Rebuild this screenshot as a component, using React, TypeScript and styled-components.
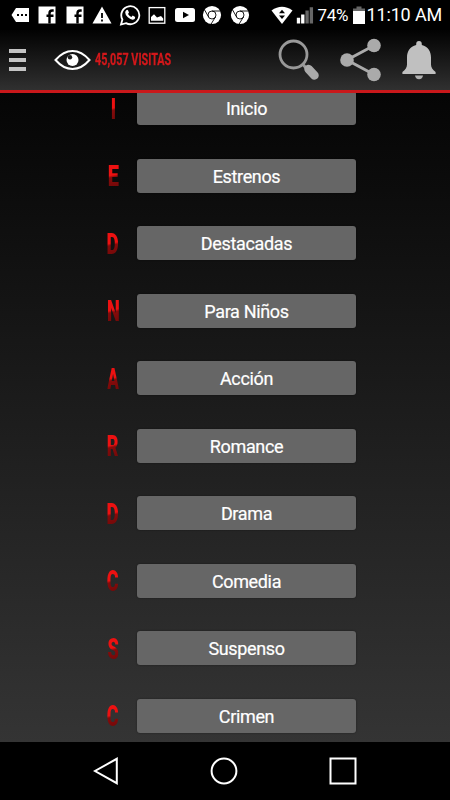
import React from "react";
import styled, { createGlobalStyle } from "styled-components";

const GlobalStyle = createGlobalStyle`
  * { box-sizing: border-box; }
  body { margin: 0; background: #000; overflow: hidden; }
`;

const Screen = styled.div`
  width: 450px;
  height: 800px;
  display: flex;
  flex-direction: column;
  overflow: hidden;
  background: #000;
  color: #fff;
  font-family: Roboto, "Liberation Sans", sans-serif;
`;

const StatusBar = styled.div`
  height: 30px;
  flex: none;
  display: flex;
  align-items: center;
  padding-left: 6px;
  background: #000;
`;

const Notifications = styled.div`
  display: grid;
  grid-template-columns: repeat(9, 27.5px);
  align-items: center;
  justify-items: center;
  margin-right: 17px;
`;

const Glyph = styled.svg<{ $w?: number; $h?: number }>`
  display: block;
  flex: none;
  width: ${(p) => p.$w ?? 20}px;
  height: ${(p) => p.$h ?? 20}px;
`;

const Percent = styled.span`
  width: 39px;
  padding-left: 4px;
  font-size: 17px;
  line-height: 32px;
  letter-spacing: -0.3px;
  white-space: nowrap;
`;

const Clock = styled.span`
  padding-left: 2px;
  font-size: 18px;
  line-height: 32px;
  letter-spacing: -0.15px;
  white-space: nowrap;
`;

const Header = styled.header`
  height: 63px;
  flex: none;
  display: flex;
  align-items: center;
  padding-left: 9px;
  border-bottom: 3px solid #c9181b;
  background: linear-gradient(#020202, #303030);
`;

const MenuButton = styled.div`
  width: 17px;
  height: 22px;
  display: flex;
  flex-direction: column;
  justify-content: space-between;
  margin-right: 28px;

  i {
    height: 4px;
    background: #c4c4c4;
  }
`;

const Visits = styled.div`
  width: 76px;
  margin-left: 4px;
  font-size: 16px;
  font-weight: 700;
  line-height: 20px;
  color: #d3181b;
  -webkit-text-stroke: 0.3px #d3181b;
  white-space: nowrap;

  span {
    display: inline-block;
    transform: scaleX(0.675);
    transform-origin: left center;
  }
`;

const Actions = styled.div`
  margin-left: 107px;
  display: flex;
  align-items: center;
  gap: 20px;
`;

const Content = styled.main`
  height: 649px;
  flex: none;
  overflow: hidden;
  background: linear-gradient(#050505, #343434);
`;

const CategoryList = styled.div`
  display: flex;
  flex-direction: column;
  gap: 33.5px;
  margin-top: -2px;
`;

const Category = styled.div`
  display: flex;
  align-items: center;
  height: 34px;
  padding-left: 103px;
`;

const Initial = styled.div<{ $scale: number }>`
  width: 20px;
  margin-right: 14px;
  padding-top: 1px;
  display: flex;
  justify-content: center;
  font-size: 29.5px;
  font-weight: 900;
  line-height: 26px;

  span {
    transform: scaleX(${(p) => p.$scale});
    color: transparent;
    background: linear-gradient(172deg, #ed1111 46%, #850b0b 54%, #740909 90%);
    background-clip: text;
    -webkit-background-clip: text;
  }
`;

const CategoryButton = styled.button`
  width: 219px;
  height: 34px;
  border: 0;
  border-radius: 3px;
  padding: 1px 0 0;
  background: #666;
  color: #fff;
  box-shadow: 0 0 2px rgba(0, 0, 0, 0.45);
  font: 400 18px Roboto, "Liberation Sans", sans-serif;
  letter-spacing: -0.35px;
  -webkit-text-stroke: 0.2px #fff;
  text-align: center;
`;

const NavBar = styled.nav`
  flex: 1;
  display: flex;
  align-items: center;
  justify-content: space-between;
  padding: 0 93px;
  background: #000;
`;

const categories: { initial: string; label: string; scale: number }[] = [
  { initial: "I", label: "Inicio", scale: 0.6 },
  { initial: "E", label: "Estrenos", scale: 0.68 },
  { initial: "D", label: "Destacadas", scale: 0.64 },
  { initial: "N", label: "Para Niños", scale: 0.62 },
  { initial: "A", label: "Acción", scale: 0.58 },
  { initial: "R", label: "Romance", scale: 0.61 },
  { initial: "D", label: "Drama", scale: 0.64 },
  { initial: "C", label: "Comedia", scale: 0.61 },
  { initial: "S", label: "Suspenso", scale: 0.62 },
  { initial: "C", label: "Crimen", scale: 0.61 },
];

const MessageIcon = () => (
  <Glyph viewBox="0 0 20 20">
    <path d="M6 3h13v14H6l-4.5-7z" fill="#fff" />
    <path d="M7 10h2M11 10h2M15 10h2" stroke="#000" strokeWidth="2" />
  </Glyph>
);

const FacebookIcon = () => (
  <Glyph viewBox="0 0 20 20">
    <path d="M1.5 1.5h17v17h-17z" fill="#fff" />
    <path d="M12.5 18.5V8.3q0-2.8 2.7-2.8h1.5M9.5 10.7h7" fill="none" stroke="#000" strokeWidth="2.4" />
  </Glyph>
);

const WarningIcon = () => (
  <Glyph viewBox="0 0 20 20">
    <path d="M10 1.5l9.5 17H.5z" fill="#fff" />
    <path d="M10 8v5M10 14.5v2" stroke="#000" strokeWidth="1.8" />
  </Glyph>
);

const WhatsAppIcon = () => (
  <Glyph viewBox="0 0 22 22" $w={22} $h={22}>
    <path d="M2 20.5l1.4-5A9 9 0 1 1 7 19.1z" fill="none" stroke="#fff" strokeWidth="1.8" />
    <path
      d="M7.3 6.2q.9-.8 1.7 0l1 2.3-1 1.4q1.2 2.1 3.4 3.1l1.3-1.4 2.5 1.3q.2 2.4-2.3 2.8-2.2.2-5.1-2.4-2.7-2.7-2.6-4.8.1-1.5 1.1-2.3z"
      fill="#fff"
    />
  </Glyph>
);

const ImageIcon = () => (
  <Glyph viewBox="0 0 20 20">
    <rect x="2.2" y="2.6" width="15.6" height="15.6" fill="none" stroke="#fff" strokeWidth="1.3" />
    <path d="M4 15.7V12l3-2.7 3 3.2 4-1.6 2.2 2.5v2.3z" fill="#fff" />
  </Glyph>
);

const VideoIcon = () => (
  <Glyph viewBox="0 0 20 20">
    <rect x="0" y="3" width="20" height="14" rx="2.5" fill="#fff" />
    <path d="M8 6.8l6 3.2-6 3.2z" fill="#000" />
  </Glyph>
);

const ChromeIcon = () => (
  <Glyph viewBox="0 0 20 20">
    <circle cx="10" cy="10" r="9.1" fill="#fff" />
    <circle cx="10" cy="10" r="4" fill="none" stroke="#000" strokeWidth="0.9" />
    <path d="M10 6h8.5M13.4 12L9 19.2M6.6 12L2.4 4.6" fill="none" stroke="#000" strokeWidth="0.9" />
  </Glyph>
);

const WifiIcon = () => (
  <Glyph viewBox="0 0 22 20" $w={22}>
    <path d="M.5 5.5Q11-2 21.5 5.5L11 19z" fill="#fff" />
    <path d="M11 4.7L14 8.3H8zM11 14L8 10.4h6z" fill="#000" />
  </Glyph>
);

const SignalIcon = () => (
  <Glyph viewBox="0 0 22 20" $w={21}>
    <path d="M4 13h3.5v6H4zM8.5 9.5H12V19H8.5z" fill="#fff" />
    <path d="M13 5.3h3.5V19H13zM17.5 2H21v17h-3.5z" fill="#666" />
  </Glyph>
);

const BatteryIcon = () => (
  <Glyph viewBox="0 0 12 20" $w={12}>
    <path d="M3.5 1.5h5v2H12V7H0V3.5h3.5z" fill="#666" />
    <path d="M0 6h12v13H0z" fill="#fff" />
  </Glyph>
);

const EyeIcon = () => (
  <Glyph viewBox="0 0 37 22" $w={37} $h={22}>
    <path
      d="M1.5 11C7 4.7 12.2 2 18.5 2S30 4.7 35.5 11C30 17.3 24.8 20 18.5 20S7 17.3 1.5 11z"
      fill="none"
      stroke="#fff"
      strokeWidth="2"
    />
    <circle cx="18.5" cy="11" r="6" fill="#fff" />
    <circle cx="16" cy="8.2" r="2.2" fill="#1b1b1b" />
  </Glyph>
);

const SearchIcon = () => (
  <Glyph viewBox="0 0 42 42" $w={42} $h={42}>
    <circle cx="15.5" cy="15.5" r="13.5" fill="none" stroke="#999" strokeWidth="2.8" />
    <path d="M24.5 25l5 5.5" stroke="#999" strokeWidth="3" />
    <path d="M30.5 30l6 6.5" stroke="#aaa" strokeWidth="8.5" strokeLinecap="round" />
  </Glyph>
);

const ShareIcon = () => (
  <Glyph viewBox="0 0 42 44" $w={42} $h={44}>
    <path d="M34 7.5L7 22l27 14.5" fill="none" stroke="#aaa" strokeWidth="3" />
    <circle cx="34" cy="7.5" r="6.8" fill="#aaa" />
    <circle cx="7" cy="22" r="6.8" fill="#aaa" />
    <circle cx="34" cy="36.5" r="6.8" fill="#aaa" />
  </Glyph>
);

const BellIcon = () => (
  <Glyph viewBox="0 0 34 40" $w={34} $h={40}>
    <path
      d="M14.2 5V4q0-3 2.8-3t2.8 3v1C26 6.5 29 11.5 29 17.5v7q0 4 4.6 7.5V34H.4v-2Q5 28.5 5 24.5v-7C5 11.5 8 6.5 14.2 5z"
      fill="#c0c0c0"
    />
    <path d="M13 35.5h8q-.5 3.7-4 3.7t-4-3.7z" fill="#b0b0b0" />
  </Glyph>
);

export default function App() {
  return (
    <>
      <GlobalStyle />
      <Screen>
        <StatusBar>
          <Notifications>
            <MessageIcon />
            <FacebookIcon />
            <FacebookIcon />
            <WarningIcon />
            <WhatsAppIcon />
            <ImageIcon />
            <VideoIcon />
            <ChromeIcon />
            <ChromeIcon />
          </Notifications>
          <WifiIcon />
          <SignalIcon />
          <Percent>74%</Percent>
          <BatteryIcon />
          <Clock>11:10 AM</Clock>
        </StatusBar>
        <Header>
          <MenuButton>
            <i />
            <i />
            <i />
          </MenuButton>
          <EyeIcon />
          <Visits>
            <span>45,057 VISITAS</span>
          </Visits>
          <Actions>
            <SearchIcon />
            <ShareIcon />
            <BellIcon />
          </Actions>
        </Header>
        <Content>
          <CategoryList>
            {categories.map(({ initial, label, scale }) => (
              <Category key={label}>
                <Initial $scale={scale}>
                  <span>{initial}</span>
                </Initial>
                <CategoryButton>{label}</CategoryButton>
              </Category>
            ))}
          </CategoryList>
        </Content>
        <NavBar>
          <Glyph viewBox="0 0 26 28" $w={26} $h={28}>
            <path d="M23.8 1.8v24.4L2 14z" fill="none" stroke="#fff" strokeWidth="2" />
          </Glyph>
          <Glyph viewBox="0 0 28 28" $w={28} $h={28}>
            <circle cx="14" cy="14" r="12.4" fill="none" stroke="#fff" strokeWidth="2" />
          </Glyph>
          <Glyph viewBox="0 0 28 28" $w={28} $h={28}>
            <rect x="1.5" y="1.5" width="25" height="25" fill="none" stroke="#fff" strokeWidth="2" />
          </Glyph>
        </NavBar>
      </Screen>
    </>
  );
}
